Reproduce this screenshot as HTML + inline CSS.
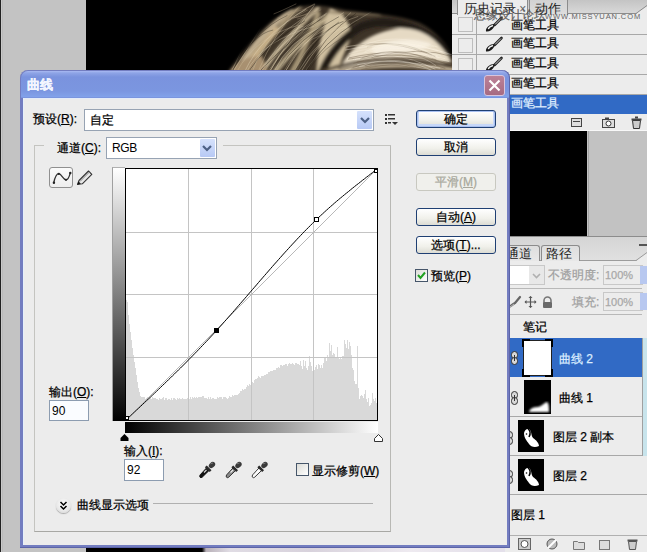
<!DOCTYPE html>
<html><head><meta charset="utf-8">
<style>
*{margin:0;padding:0;box-sizing:border-box}
html,body{width:647px;height:552px;overflow:hidden;background:#c3c3c3;font-family:"Liberation Sans",sans-serif;font-size:12px;color:#000}
.a{position:absolute}
.t{position:absolute;white-space:nowrap;line-height:12px;font-size:12px;-webkit-text-stroke:0.25px currentColor}
.u{text-decoration:underline}
.btn{position:absolute;left:416px;width:80px;border:1px solid #1f3f73;border-radius:3px;background:linear-gradient(#ffffff,#f0f0ea 60%,#dcdcd4);text-align:center;line-height:16px;font-size:12px;-webkit-text-stroke:0.25px currentColor}
.sel{position:absolute;border:1px solid #97a3b3;background:#fff}
.arr{position:absolute;top:1px;right:1px;width:15px;bottom:1px;background:linear-gradient(#d6e2fc,#b7c9f5);border-radius:1px}
.hrow{position:absolute;left:452px;width:195px;height:20px;background:#ececec;border-bottom:1px solid #a8a8a8}
.lrow{position:absolute;left:505px;width:137px;background:#ececec;border-bottom:1px solid #a8a8a8}
</style></head><body>
<!-- left dark edge -->
<div class="a" style="left:0;top:0;width:1px;height:552px;background:#222"></div>
<div class="a" style="left:1px;top:0;width:1px;height:552px;background:#cacaca"></div>
<div class="a" style="left:2px;top:0;width:1px;height:552px;background:#bababa"></div>
<!-- canvas black -->
<div class="a" style="left:86px;top:0;width:501px;height:552px;background:#000"></div>
<!-- bottom face strip -->
<div class="a" style="left:190px;top:546px;width:320px;height:6px;background:linear-gradient(90deg,#000 0px,#000 12px,#b8b0b8 16px,#e0dce4 40px,#d8d2dc 120px,#eeeaf0 220px,#e4e0ea 300px)"></div>
<!-- hair -->
<svg class="a" style="left:205px;top:0" width="251" height="72" viewBox="205 0 251 72">
<defs><filter id="bl" x="-10%" y="-30%" width="120%" height="160%"><feGaussianBlur stdDeviation="1.8"/></filter><filter id="mb"><feGaussianBlur stdDeviation="1.5"/></filter><mask id="hc" maskUnits="userSpaceOnUse" x="200" y="-10" width="260" height="90"><path d="M226,74 C236,60 248,46 260,32 C272,20 284,11 298,7 C314,4 330,6 345,10 C370,13 400,15 420,23 C436,31 448,45 454,60 L457,74 Z" fill="#fff" filter="url(#mb)"/></mask></defs>
<g mask="url(#hc)">
<rect x="205" y="0" width="251" height="72" fill="#3e3428"/>
<g filter="url(#bl)" fill="none" stroke-linecap="round">
<path d="M236,72 Q255,40 290,10" stroke="#c0ae90" stroke-width="6"/>
<path d="M248,72 Q265,40 300,6" stroke="#a89676" stroke-width="4"/>
<path d="M262,72 Q280,45 318,8" stroke="#c4b494" stroke-width="4"/>
<path d="M275,72 Q292,50 330,14" stroke="#b8a888" stroke-width="5"/>
<path d="M240,72 Q258,52 276,30" stroke="#c8b088" stroke-width="6"/>
<path d="M292,72 Q306,48 318,14" stroke="#a89878" stroke-width="5"/>
<path d="M228,72 C236,62 246,56 262,56 L268,72 Z" fill="#a89070"/>
<path d="M316,72 C318,50 322,28 330,8 C345,12 352,25 350,40 C345,52 340,62 338,72 Z" fill="#d0c0a0"/>
<path d="M322,72 Q335,42 362,26 Q405,12 450,52" stroke="#241c14" stroke-width="8"/>
<path d="M340,68 C350,46 372,32 400,28 C425,28 440,42 452,62 C440,64 400,58 365,64 Z" fill="#e6dac4"/>
<path d="M370,50 C385,40 410,36 432,44 C425,52 400,50 380,56 Z" fill="#f6eee0"/>
<path d="M322,71 Q380,52 442,64" stroke="#4a3c2e" stroke-width="3"/>
<path d="M335,72 Q390,60 456,70" stroke="#c0b096" stroke-width="4"/>
<path d="M330,12 Q350,14 380,14" stroke="#8a7a60" stroke-width="2"/>
</g>
<path d="M294.0,72.0 Q311.9,30.8 358.2,16.4" stroke="#d8c8a8" stroke-width="0.8" fill="none" opacity="0.42"/>
<path d="M231.7,72.0 Q253.2,33.5 273.2,30.0" stroke="#1e1810" stroke-width="0.8" fill="none" opacity="0.43"/>
<path d="M307.9,72.0 Q326.8,37.4 374.8,25.6" stroke="#1e1810" stroke-width="0.8" fill="none" opacity="0.32"/>
<path d="M273.6,72.0 Q289.2,40.2 321.7,26.6" stroke="#e0d4b8" stroke-width="0.8" fill="none" opacity="0.56"/>
<path d="M246.6,72.0 Q261.8,40.6 313.5,26.4" stroke="#e0d4b8" stroke-width="0.8" fill="none" opacity="0.45"/>
<path d="M263.8,72.0 Q286.9,34.7 309.9,11.1" stroke="#d8c8a8" stroke-width="0.8" fill="none" opacity="0.34"/>
<path d="M285.3,72.0 Q302.6,34.8 338.7,24.4" stroke="#d8c8a8" stroke-width="0.8" fill="none" opacity="0.45"/>
<path d="M269.5,72.0 Q293.9,31.3 316.6,2.4" stroke="#e0d4b8" stroke-width="0.8" fill="none" opacity="0.55"/>
<path d="M258.2,72.0 Q282.5,38.3 326.7,13.2" stroke="#e0d4b8" stroke-width="0.8" fill="none" opacity="0.52"/>
<path d="M283.3,72.0 Q300.5,39.6 343.8,15.0" stroke="#d8c8a8" stroke-width="0.8" fill="none" opacity="0.33"/>
<path d="M284.8,72.0 Q307.7,32.9 343.8,12.5" stroke="#d8c8a8" stroke-width="0.8" fill="none" opacity="0.54"/>
<path d="M259.2,72.0 Q283.6,44.9 320.6,19.2" stroke="#1e1810" stroke-width="0.8" fill="none" opacity="0.52"/>
<path d="M294.3,72.0 Q317.8,36.0 338.9,22.0" stroke="#1e1810" stroke-width="0.8" fill="none" opacity="0.44"/>
<path d="M306.6,72.0 Q321.6,36.3 356.1,13.3" stroke="#1e1810" stroke-width="0.8" fill="none" opacity="0.49"/>
<path d="M304.7,72.0 Q329.6,32.8 372.4,11.2" stroke="#e0d4b8" stroke-width="0.8" fill="none" opacity="0.35"/>
<path d="M261.2,72.0 Q284.5,32.1 303.4,26.0" stroke="#e0d4b8" stroke-width="0.8" fill="none" opacity="0.46"/>
<path d="M249.2,72.0 Q265.2,43.0 303.9,17.5" stroke="#e0d4b8" stroke-width="0.8" fill="none" opacity="0.43"/>
<path d="M232.7,72.0 Q251.1,43.9 272.8,7.5" stroke="#d8c8a8" stroke-width="0.8" fill="none" opacity="0.57"/>
<path d="M267.4,72.0 Q291.0,35.1 321.0,20.7" stroke="#d8c8a8" stroke-width="0.8" fill="none" opacity="0.42"/>
<path d="M276.7,72.0 Q298.6,40.5 338.8,16.0" stroke="#e0d4b8" stroke-width="0.8" fill="none" opacity="0.30"/>
<path d="M231.2,72.0 Q248.2,30.7 275.7,8.0" stroke="#e0d4b8" stroke-width="0.8" fill="none" opacity="0.48"/>
<path d="M300.7,72.0 Q319.8,40.2 351.1,12.3" stroke="#d8c8a8" stroke-width="0.8" fill="none" opacity="0.54"/>
<path d="M305.2,72.0 Q323.6,42.4 356.4,21.8" stroke="#1e1810" stroke-width="0.8" fill="none" opacity="0.56"/>
<path d="M269.4,72.0 Q287.6,37.4 331.2,17.0" stroke="#d8c8a8" stroke-width="0.8" fill="none" opacity="0.32"/>
<path d="M231.5,72.0 Q254.9,30.3 287.4,15.4" stroke="#1e1810" stroke-width="0.8" fill="none" opacity="0.45"/>
<path d="M277.0,72.0 Q297.7,37.4 338.9,16.7" stroke="#1e1810" stroke-width="0.8" fill="none" opacity="0.48"/>
<path d="M248.3,72.0 Q265.3,44.9 304.9,20.8" stroke="#1e1810" stroke-width="0.8" fill="none" opacity="0.59"/>
<path d="M252.1,72.0 Q267.6,30.3 305.4,9.3" stroke="#e0d4b8" stroke-width="0.8" fill="none" opacity="0.37"/>
<path d="M298.6,72.0 Q316.1,31.0 343.5,21.3" stroke="#1e1810" stroke-width="0.8" fill="none" opacity="0.50"/>
<path d="M269.1,72.0 Q286.9,37.3 325.6,14.7" stroke="#d8c8a8" stroke-width="0.8" fill="none" opacity="0.58"/>
<path d="M244.5,72.0 Q261.5,34.9 306.5,9.0" stroke="#e0d4b8" stroke-width="0.8" fill="none" opacity="0.58"/>
<path d="M257.9,72.0 Q273.5,33.2 303.2,2.0" stroke="#d8c8a8" stroke-width="0.8" fill="none" opacity="0.43"/>
<path d="M277.3,72.0 Q294.8,39.2 346.8,26.9" stroke="#e0d4b8" stroke-width="0.8" fill="none" opacity="0.33"/>
<path d="M298.0,72.0 Q316.3,39.4 349.9,23.9" stroke="#e0d4b8" stroke-width="0.8" fill="none" opacity="0.45"/>
<path d="M236.6,72.0 Q256.4,35.8 299.4,25.0" stroke="#d8c8a8" stroke-width="0.8" fill="none" opacity="0.41"/>
<path d="M371.4,55.5 Q396.7,45.2 439.7,57.8" stroke="#fff8ea" stroke-width="0.8" fill="none" opacity="0.37"/>
<path d="M346.9,58.5 Q387.3,41.5 441.5,56.8" stroke="#f6eedc" stroke-width="0.8" fill="none" opacity="0.41"/>
<path d="M373.5,47.8 Q397.5,39.3 440.7,55.4" stroke="#f6eedc" stroke-width="0.8" fill="none" opacity="0.58"/>
<path d="M365.5,51.5 Q411.9,35.9 442.5,52.5" stroke="#f6eedc" stroke-width="0.8" fill="none" opacity="0.46"/>
<path d="M350.5,55.1 Q393.7,44.5 449.3,61.7" stroke="#f6eedc" stroke-width="0.8" fill="none" opacity="0.43"/>
<path d="M356.6,62.1 Q402.4,53.5 450.5,64.1" stroke="#6a5a46" stroke-width="0.8" fill="none" opacity="0.58"/>
<path d="M360.1,58.9 Q409.0,48.9 445.8,63.7" stroke="#6a5a46" stroke-width="0.8" fill="none" opacity="0.39"/>
<path d="M371.6,57.5 Q418.9,45.4 455.0,57.2" stroke="#6a5a46" stroke-width="0.8" fill="none" opacity="0.56"/>
<path d="M348.9,57.9 Q399.1,46.7 436.5,60.0" stroke="#6a5a46" stroke-width="0.8" fill="none" opacity="0.54"/>
<path d="M345.4,70.0 Q394.1,56.7 454.8,76.1" stroke="#fff8ea" stroke-width="0.8" fill="none" opacity="0.41"/>
<path d="M346.0,46.8 Q396.8,36.8 434.1,46.9" stroke="#f6eedc" stroke-width="0.8" fill="none" opacity="0.55"/>
<path d="M345.2,46.4 Q394.7,38.3 431.6,55.6" stroke="#6a5a46" stroke-width="0.8" fill="none" opacity="0.37"/>
<path d="M352.9,59.6 Q391.5,47.0 435.3,69.3" stroke="#fff8ea" stroke-width="0.8" fill="none" opacity="0.47"/>
<path d="M353.4,63.4 Q396.3,48.9 455.8,68.5" stroke="#6a5a46" stroke-width="0.8" fill="none" opacity="0.45"/>
<path d="M364.6,51.5 Q392.6,38.8 437.9,55.7" stroke="#fff8ea" stroke-width="0.8" fill="none" opacity="0.35"/>
<path d="M352.6,67.5 Q402.9,51.5 445.3,68.4" stroke="#6a5a46" stroke-width="0.8" fill="none" opacity="0.54"/>
<path d="M355.0,59.6 Q403.9,46.5 445.2,58.6" stroke="#fff8ea" stroke-width="0.8" fill="none" opacity="0.46"/>
<path d="M367.1,46.9 Q397.3,36.9 435.5,56.8" stroke="#6a5a46" stroke-width="0.8" fill="none" opacity="0.39"/>
<path d="M361.8,46.0 Q392.7,31.6 437.5,47.1" stroke="#f6eedc" stroke-width="0.8" fill="none" opacity="0.59"/>
<path d="M372.5,56.0 Q402.6,45.0 431.7,58.2" stroke="#f6eedc" stroke-width="0.8" fill="none" opacity="0.52"/>
<path d="M371.9,56.7 Q411.7,47.7 436.2,65.7" stroke="#fff8ea" stroke-width="0.8" fill="none" opacity="0.36"/>
<path d="M364.8,65.5 Q403.7,52.4 455.0,63.8" stroke="#6a5a46" stroke-width="0.8" fill="none" opacity="0.53"/>
<path d="M361.7,58.0 Q400.6,42.4 436.2,63.8" stroke="#6a5a46" stroke-width="0.8" fill="none" opacity="0.36"/>
<path d="M348.7,53.8 Q387.0,40.2 438.5,57.3" stroke="#fff8ea" stroke-width="0.8" fill="none" opacity="0.30"/>
<path d="M372.3,47.3 Q403.6,37.5 438.0,51.1" stroke="#fff8ea" stroke-width="0.8" fill="none" opacity="0.52"/>
<path d="M370.2,50.7 Q395.2,35.2 434.3,54.9" stroke="#f6eedc" stroke-width="0.8" fill="none" opacity="0.55"/>
<path d="M357.3,64.7 Q390.9,56.4 440.2,68.2" stroke="#fff8ea" stroke-width="0.8" fill="none" opacity="0.50"/>
<path d="M350.8,68.9 Q405.6,58.5 444.7,73.8" stroke="#6a5a46" stroke-width="0.8" fill="none" opacity="0.37"/>
<path d="M358.7,48.8 Q395.6,38.1 437.3,55.6" stroke="#f6eedc" stroke-width="0.8" fill="none" opacity="0.37"/>
<path d="M360.9,69.9 Q403.2,57.1 434.4,78.0" stroke="#6a5a46" stroke-width="0.8" fill="none" opacity="0.46"/>
<path d="M348.1,59.2 Q401.2,47.7 455.7,66.0" stroke="#6a5a46" stroke-width="0.8" fill="none" opacity="0.56"/>
<path d="M345.2,50.0 Q406.6,37.7 454.9,55.8" stroke="#fff8ea" stroke-width="0.8" fill="none" opacity="0.46"/>
<path d="M363.9,47.2 Q394.4,38.8 442.5,56.5" stroke="#f6eedc" stroke-width="0.8" fill="none" opacity="0.33"/>
<path d="M365.5,67.3 Q394.2,55.0 434.1,75.5" stroke="#6a5a46" stroke-width="0.8" fill="none" opacity="0.34"/>
<path d="M359.3,66.7 Q398.4,51.1 439.2,74.2" stroke="#fff8ea" stroke-width="0.8" fill="none" opacity="0.42"/>
</g>
<path d="M293.3,11.5 Q299.3,12.3 315.0,4.3" stroke="#9a8a70" stroke-width="0.7" fill="none" opacity="0.60"/>
<path d="M277.3,18.1 Q283.3,16.8 297.2,8.8" stroke="#9a8a70" stroke-width="0.7" fill="none" opacity="0.60"/>
<path d="M287.9,21.6 Q293.9,17.9 307.8,9.9" stroke="#9a8a70" stroke-width="0.7" fill="none" opacity="0.60"/>
<path d="M288.9,18.4 Q294.9,19.1 313.1,11.1" stroke="#9a8a70" stroke-width="0.7" fill="none" opacity="0.60"/>
<path d="M293.7,17.1 Q299.7,11.7 314.6,3.7" stroke="#9a8a70" stroke-width="0.7" fill="none" opacity="0.60"/>
<path d="M273.6,14.0 Q279.6,11.8 296.3,3.8" stroke="#9a8a70" stroke-width="0.7" fill="none" opacity="0.60"/>
<path d="M285.3,18.0 Q291.3,19.8 314.0,11.8" stroke="#9a8a70" stroke-width="0.7" fill="none" opacity="0.60"/>
<path d="M297.2,19.2 Q303.2,17.7 321.2,9.7" stroke="#9a8a70" stroke-width="0.7" fill="none" opacity="0.60"/>
</svg>


<!-- gray block right of canvas under history -->
<div class="a" style="left:588px;top:130px;width:59px;height:106px;background:#c2c2c2;border-left:1px solid #a4a4a4"></div>

<!-- M126,420 L126,300 L127,300 L127,302 L128,302 L128,315 L129,315 L129,324 L130,324 L130,332 L131,332 L131,340 L132,340 L132,348 L133,348 L133,355 L134,355 L134,362 L135,362 L135,368 L136,368 L136,375 L137,375 L137,382 L138,382 L138,388 L139,388 L139,392 L140,392 L140,396 L141,396 L141,397 L142,397 L142,397 L143,397 L143,397 L144,397 L144,397 L145,397 L145,399 L146,399 L146,398 L147,398 L147,397 L148,397 L148,398 L149,398 L149,398 L150,398 L150,397 L151,397 L151,399 L152,399 L152,397 L153,397 L153,398 L154,398 L154,398 L155,398 L155,398 L156,398 L156,399 L157,399 L157,399 L158,399 L158,400 L159,400 L159,398 L160,398 L160,399 L161,399 L161,399 L162,399 L162,398 L163,398 L163,397 L164,397 L164,400 L165,400 L165,398 L166,398 L166,398 L167,398 L167,400 L168,400 L168,399 L169,399 L169,399 L170,399 L170,400 L171,400 L171,398 L172,398 L172,400 L173,400 L173,398 L174,398 L174,398 L175,398 L175,399 L176,399 L176,400 L177,400 L177,398 L178,398 L178,399 L179,399 L179,398 L180,398 L180,399 L181,399 L181,399 L182,399 L182,398 L183,398 L183,399 L184,399 L184,399 L185,399 L185,399 L186,399 L186,399 L187,399 L187,398 L188,398 L188,399 L189,399 L189,399 L190,399 L190,397 L191,397 L191,399 L192,399 L192,397 L193,397 L193,398 L194,398 L194,397 L195,397 L195,398 L196,398 L196,397 L197,397 L197,398 L198,398 L198,397 L199,397 L199,397 L200,397 L200,397 L201,397 L201,397 L202,397 L202,396 L203,396 L203,396 L204,396 L204,398 L205,398 L205,398 L206,398 L206,398 L207,398 L207,399 L208,399 L208,397 L209,397 L209,399 L210,399 L210,397 L211,397 L211,399 L212,399 L212,398 L213,398 L213,398 L214,398 L214,399 L215,399 L215,399 L216,399 L216,399 L217,399 L217,397 L218,397 L218,398 L219,398 L219,397 L220,397 L220,397 L221,397 L221,397 L222,397 L222,399 L223,399 L223,397 L224,397 L224,397 L225,397 L225,397 L226,397 L226,398 L227,398 L227,399 L228,399 L228,398 L229,398 L229,396 L230,396 L230,397 L231,397 L231,397 L232,397 L232,395 L233,395 L233,396 L234,396 L234,395 L235,395 L235,395 L236,395 L236,395 L237,395 L237,395 L238,395 L238,394 L239,394 L239,393 L240,393 L240,391 L241,391 L241,391 L242,391 L242,389 L243,389 L243,390 L244,390 L244,389 L245,389 L245,389 L246,389 L246,387 L247,387 L247,385 L248,385 L248,386 L249,386 L249,384 L250,384 L250,385 L251,385 L251,383 L252,383 L252,382 L253,382 L253,383 L254,383 L254,380 L255,380 L255,379 L256,379 L256,379 L257,379 L257,378 L258,378 L258,376 L259,376 L259,377 L260,377 L260,378 L261,378 L261,376 L262,376 L262,376 L263,376 L263,376 L264,376 L264,375 L265,375 L265,375 L266,375 L266,374 L267,374 L267,374 L268,374 L268,372 L269,372 L269,372 L270,372 L270,371 L271,371 L271,371 L272,371 L272,371 L273,371 L273,370 L274,370 L274,370 L275,370 L275,370 L276,370 L276,368 L277,368 L277,368 L278,368 L278,367 L279,367 L279,368 L280,368 L280,365 L281,365 L281,365 L282,365 L282,366 L283,366 L283,365 L284,365 L284,365 L285,365 L285,364 L286,364 L286,364 L287,364 L287,366 L288,366 L288,364 L289,364 L289,363 L290,363 L290,364 L291,364 L291,364 L292,364 L292,363 L293,363 L293,364 L294,364 L294,365 L295,365 L295,363 L296,363 L296,363 L297,363 L297,364 L298,364 L298,364 L299,364 L299,365 L300,365 L300,361 L301,361 L301,366 L302,366 L302,369 L303,369 L303,360 L304,360 L304,366 L305,366 L305,361 L306,361 L306,368 L307,368 L307,370 L308,370 L308,366 L309,366 L309,356 L310,356 L310,362 L311,362 L311,366 L312,366 L312,371 L313,371 L313,365 L314,365 L314,370 L315,370 L315,367 L316,367 L316,365 L317,365 L317,369 L318,369 L318,364 L319,364 L319,365 L320,365 L320,368 L321,368 L321,365 L322,365 L322,368 L323,368 L323,363 L324,363 L324,357 L325,357 L325,358 L326,358 L326,361 L327,361 L327,355 L328,355 L328,358 L329,358 L329,343 L330,343 L330,351 L331,351 L331,345 L332,345 L332,355 L333,355 L333,353 L334,353 L334,354 L335,354 L335,358 L336,358 L336,357 L337,357 L337,347 L338,347 L338,357 L339,357 L339,359 L340,359 L340,357 L341,357 L341,359 L342,359 L342,356 L343,356 L343,356 L344,356 L344,340 L345,340 L345,344 L346,344 L346,348 L347,348 L347,340 L348,340 L348,349 L349,349 L349,342 L350,342 L350,346 L351,346 L351,355 L352,355 L352,368 L353,368 L353,370 L354,370 L354,381 L355,381 L355,384 L356,384 L356,384 L357,384 L357,346 L358,346 L358,388 L359,388 L359,399 L360,399 L360,396 L361,396 L361,395 L362,395 L362,396 L363,396 L363,398 L364,398 L364,394 L365,394 L365,390 L366,390 L366,399 L367,399 L367,402 L368,402 L368,398 L369,398 L369,406 L370,406 L370,405 L371,405 L371,403 L372,403 L372,393 L373,393 L373,399 L374,399 L374,401 L375,401 L375,398 L376,398 L376,403 L377,403 L377,420 ZORY PANEL -->
<div class="a" style="left:452px;top:0;width:195px;height:131px;background:#ececec"></div>
<div class="a" style="left:452px;top:0;width:195px;height:14px;background:linear-gradient(#c4c4c4,#d8d8d8);border-bottom:1px solid #8c8c8c"></div><svg class="a" style="left:636px;top:0" width="11" height="15"><path d="M0,14 L11,6 L11,15 L0,15 Z" fill="#ececec"/><path d="M0,13.5 L11,5.5" stroke="#8c8c8c"/></svg>
<div class="a" style="left:457px;top:-4px;width:71px;height:20px;background:#ececec;border:1px solid #8c8c8c;border-bottom:none;border-radius:4px 4px 0 0"></div>
<div class="t" style="left:464px;top:2px;color:#222;font-size:13px;line-height:13px;-webkit-text-stroke:0">历史记录<span style="color:#666;font-size:12px"> ×</span></div>
<div class="a" style="left:529px;top:-4px;width:39px;height:19px;background:linear-gradient(#d0d0d0,#dedede);border:1px solid #8c8c8c;border-bottom:none;border-radius:4px 4px 0 0"></div>
<div class="t" style="left:535px;top:2px;color:#222;font-size:13px;line-height:13px;-webkit-text-stroke:0">动作</div>
<!-- rows -->
<div class="hrow" style="top:15px"></div>
<div class="hrow" style="top:35px"></div>
<div class="hrow" style="top:55px"></div>
<div class="hrow" style="top:75px"></div>
<div class="a" style="left:452px;top:95px;width:195px;height:19px;background:#316ac5"></div>
<div class="a" style="left:476px;top:14px;width:1px;height:81px;background:#a8a8a8"></div>
<div class="a" style="left:458px;top:17px;width:15px;height:15px;border:1px solid #bdbdbd"></div>
<div class="a" style="left:458px;top:38px;width:15px;height:15px;border:1px solid #bdbdbd"></div>
<div class="a" style="left:458px;top:58px;width:15px;height:15px;border:1px solid #bdbdbd"></div>
<div class="a" style="left:458px;top:78px;width:15px;height:15px;border:1px solid #bdbdbd"></div>
<svg class="a" style="left:484px;top:16px" width="20" height="18"><path d="M17.5,2 L10.5,9" stroke="#222" stroke-width="2.6" stroke-linecap="round"/><path d="M17,2.5 L11,8.5" stroke="#ddd" stroke-width="0.9"/><path d="M2,15.5 C1.5,13 3.5,10 7,8.5 L10.5,8 L10,11 C8.5,14 5,16 2,15.5 Z" fill="#1a1a1a"/><path d="M4.5,12.5 C5.5,11 7,10 8.5,9.8" stroke="#f0f0f0" stroke-width="1.4" stroke-linecap="round"/></svg>
<svg class="a" style="left:484px;top:36px" width="20" height="18"><path d="M17.5,2 L10.5,9" stroke="#222" stroke-width="2.6" stroke-linecap="round"/><path d="M17,2.5 L11,8.5" stroke="#ddd" stroke-width="0.9"/><path d="M2,15.5 C1.5,13 3.5,10 7,8.5 L10.5,8 L10,11 C8.5,14 5,16 2,15.5 Z" fill="#1a1a1a"/><path d="M4.5,12.5 C5.5,11 7,10 8.5,9.8" stroke="#f0f0f0" stroke-width="1.4" stroke-linecap="round"/></svg>
<svg class="a" style="left:484px;top:56px" width="20" height="18"><path d="M17.5,2 L10.5,9" stroke="#222" stroke-width="2.6" stroke-linecap="round"/><path d="M17,2.5 L11,8.5" stroke="#ddd" stroke-width="0.9"/><path d="M2,15.5 C1.5,13 3.5,10 7,8.5 L10.5,8 L10,11 C8.5,14 5,16 2,15.5 Z" fill="#1a1a1a"/><path d="M4.5,12.5 C5.5,11 7,10 8.5,9.8" stroke="#f0f0f0" stroke-width="1.4" stroke-linecap="round"/></svg>
<svg class="a" style="left:484px;top:76px" width="20" height="18"><path d="M17.5,2 L10.5,9" stroke="#222" stroke-width="2.6" stroke-linecap="round"/><path d="M17,2.5 L11,8.5" stroke="#ddd" stroke-width="0.9"/><path d="M2,15.5 C1.5,13 3.5,10 7,8.5 L10.5,8 L10,11 C8.5,14 5,16 2,15.5 Z" fill="#1a1a1a"/><path d="M4.5,12.5 C5.5,11 7,10 8.5,9.8" stroke="#f0f0f0" stroke-width="1.4" stroke-linecap="round"/></svg>
<svg class="a" style="left:484px;top:96px" width="20" height="18"><path d="M17.5,2 L10.5,9" stroke="#222" stroke-width="2.6" stroke-linecap="round"/><path d="M17,2.5 L11,8.5" stroke="#ddd" stroke-width="0.9"/><path d="M2,15.5 C1.5,13 3.5,10 7,8.5 L10.5,8 L10,11 C8.5,14 5,16 2,15.5 Z" fill="#1a1a1a"/><path d="M4.5,12.5 C5.5,11 7,10 8.5,9.8" stroke="#f0f0f0" stroke-width="1.4" stroke-linecap="round"/></svg>

<div class="t" style="left:511px;top:37px;">画笔工具</div>
<div class="t" style="left:511px;top:57px;">画笔工具</div>
<div class="t" style="left:511px;top:77px;">画笔工具</div>
<div class="t" style="left:511px;top:97px;color:#e0f0ff">画笔工具</div>
<div class="t" style="left:511px;top:19px;">画笔工具</div>
<!-- watermark -->
<div class="t" style="left:474px;top:9px;font-size:11.5px;color:rgba(70,70,70,0.8)">思缘设计论坛</div>
<div class="t" style="left:545px;top:13px;font-size:7.5px;line-height:7px;color:#666;letter-spacing:0.9px;-webkit-text-stroke:0">WWW.MISSYUAN.COM</div>
<!-- bottom toolbar -->
<div class="a" style="left:452px;top:114px;width:195px;height:17px;background:#ececec;border-bottom:1px solid #f8f8f8"></div>
<svg class="a" style="left:570px;top:115px" width="77" height="14">
<rect x="1.5" y="3.5" width="10" height="8" fill="#ddd" stroke="#444"/><line x1="3" y1="6.5" x2="10" y2="6.5" stroke="#444"/>
<rect x="32.5" y="4.5" width="12" height="8" fill="#ddd" stroke="#444"/><circle cx="38.5" cy="8.5" r="2.5" fill="#fff" stroke="#333"/><rect x="35" y="2.5" width="4" height="2" fill="#444"/>
<path d="M62.5,5.5 h8 l-1,8 h-6 z" fill="#ccc" stroke="#333"/><rect x="61.5" y="3.5" width="10" height="2" fill="#444"/><rect x="65" y="1.5" width="3" height="2" fill="#444"/>
</svg>

<!-- LAYERS PANEL -->
<div class="a" style="left:505px;top:236px;width:142px;height:316px;background:#ececec"></div>
<div class="a" style="left:505px;top:236px;width:142px;height:25px;background:linear-gradient(#d4d4d4,#e0e0e0);border-bottom:1px solid #9c9c9c"></div>
<div class="a" style="left:500px;top:245px;width:40px;height:16px;background:linear-gradient(#dedede,#e8e8e8);border:1px solid #8c8c8c;border-bottom:none;border-radius:3px 3px 0 0"></div>
<div class="t" style="left:506px;top:247px;color:#222;font-size:13px;line-height:13px;-webkit-text-stroke:0">通道</div>
<div class="a" style="left:541px;top:245px;width:39px;height:16px;background:linear-gradient(#dedede,#e8e8e8);border:1px solid #8c8c8c;border-bottom:none;border-radius:3px 3px 0 0"></div>
<div class="t" style="left:546px;top:247px;color:#222;font-size:13px;line-height:13px;-webkit-text-stroke:0">路径</div>
<div class="a" style="left:505px;top:236px;width:142px;height:1px;background:#8c8c8c"></div><div class="a" style="left:639px;top:244px;width:8px;height:2px;background:#555"></div><svg class="a" style="left:636px;top:250px" width="11" height="12"><path d="M0,11 L11,3 L11,12 L0,12 Z" fill="#ececec"/><path d="M0,10.5 L11,2.5" stroke="#9c9c9c"/></svg>
<!-- opacity row -->
<div class="a" style="left:505px;top:265px;width:40px;height:20px;background:#fff;border:1px solid #c8c8c8"></div>
<div class="a" style="left:529px;top:266px;width:15px;height:18px;background:#e8e8e8"></div><svg class="a" style="left:529px;top:266px" width="15" height="18"><path d="M4,8 L7.5,11.5 L11,8" stroke="#b0b0b0" stroke-width="1.6" fill="none"/></svg>
<div class="t" style="left:548px;top:269px;color:#a0a0a0">不透明度:</div>
<div class="a" style="left:603px;top:265px;width:40px;height:20px;border:1px solid #c8c8c8;background:#ececec"></div>
<div class="t" style="left:605px;top:269px;color:#a8a8a8;font-size:11px">100%</div>
<div class="a" style="left:640px;top:266px;width:7px;height:18px;background:#b8c8f0"></div>
<div class="a" style="left:505px;top:288px;width:137px;height:1px;background:#b8b8b8"></div>
<!-- fill row -->
<div class="t" style="left:572px;top:296px;color:#a0a0a0">填充:</div>
<div class="a" style="left:603px;top:292px;width:40px;height:19px;border:1px solid #c8c8c8;background:#ececec"></div>
<div class="t" style="left:605px;top:296px;color:#a8a8a8;font-size:11px">100%</div>
<div class="a" style="left:640px;top:293px;width:7px;height:17px;background:#b8c8f0"></div>
<svg class="a" style="left:508px;top:293px" width="45" height="18">
<path d="M1,14 C3,13 5,11 7,10 L12,4" stroke="#666" stroke-width="2.2" stroke-linecap="round" fill="none"/><path d="M2,14 L6,11" stroke="#ccc" stroke-width="0.8"/>
<path d="M22.5,3.5 v11 M17,9 h11" stroke="#555" stroke-width="1.2" fill="none"/><path d="M22.5,3 l-2,2 h4 z M22.5,15 l-2,-2 h4 z M16.5,9 l2,-2 v4 z M28.5,9 l-2,-2 v4 z" fill="#555"/>
<path d="M36,9.5 v-2 a3.5,3.5 0 0 1 7,0 v2" stroke="#777" stroke-width="1.6" fill="none"/><rect x="35" y="9" width="9" height="6" rx="1" fill="#6a6a6a"/>
</svg>
<div class="a" style="left:505px;top:314px;width:137px;height:1px;background:#b8b8b8"></div>
<div class="t" style="left:523px;top:321px">笔记</div>
<!-- layer rows -->
<div class="a" style="left:642px;top:338px;width:5px;height:125px;background:#c8e4ec;border-left:1px solid #a0a0a0;border-bottom:1px solid #a0a0a0"></div>
<div class="a" style="left:505px;top:338px;width:137px;height:39px;background:#316ac5"></div>
<svg class="a" style="left:522px;top:339px" width="31" height="38"><rect x="1.5" y="1.5" width="28" height="35" fill="#fff" stroke="#222" stroke-width="1"/><path d="M1,8 V1 H8 M23,1 H30 V8 M30,30 V37 H23 M8,37 H1 V30" stroke="#000" stroke-width="2" fill="none"/></svg>
<div class="t" style="left:559px;top:353px;color:#dceeff">曲线 2</div>
<div class="lrow" style="top:377px;height:40px"></div>
<div class="a" style="left:524px;top:380px;width:27px;height:34px;background:#000"></div>
<svg class="a" style="left:524px;top:380px" width="27" height="34"><defs><filter id="tb"><feGaussianBlur stdDeviation="0.8"/></filter></defs><path d="M5,32 C6,28 10,27 14,27 C18,26 20,23 23,22 C25,23 25,28 25,32 Z" fill="#fff" filter="url(#tb)"/></svg>
<div class="t" style="left:559px;top:392px">曲线 1</div>
<div class="lrow" style="top:417px;height:39px"></div>
<div class="a" style="left:518px;top:420px;width:26px;height:32px;background:#000"></div>
<svg class="a" style="left:518px;top:420px" width="26" height="32"><path d="M6,13 C7,9 10,8 12,10 C14,13 13,16 15,18 C18,20 21,23 21,26 C17,28 13,27 11,24 C9,21 6,18 6,13 Z" fill="#fff"/><path d="M10,9 C13,11 12,15 11,17" stroke="#000" stroke-width="1.5" fill="none"/><circle cx="8.5" cy="14" r="0.8" fill="#000"/></svg>
<div class="t" style="left:553px;top:431px">图层 2 副本</div>
<div class="lrow" style="top:456px;height:39px;width:142px"></div>
<div class="a" style="left:518px;top:459px;width:26px;height:32px;background:#000"></div>
<svg class="a" style="left:518px;top:459px" width="26" height="32"><path d="M6,13 C7,9 10,8 12,10 C14,13 13,16 15,18 C18,20 21,23 21,26 C17,28 13,27 11,24 C9,21 6,18 6,13 Z" fill="#fff"/><path d="M10,9 C13,11 12,15 11,17" stroke="#000" stroke-width="1.5" fill="none"/><circle cx="8.5" cy="14" r="0.8" fill="#000"/></svg>
<div class="t" style="left:553px;top:470px">图层 2</div>
<div class="lrow" style="top:495px;height:40px;width:142px;border-bottom:none"></div>
<div class="t" style="left:511px;top:509px">图层 1</div>
<!-- links -->
<svg class="a" style="left:505px;top:340px" width="15" height="160"><rect x="6.5" y="11.5" width="6" height="7" rx="3" fill="#d8d8d8" stroke="#333"/><rect x="6.5" y="17.5" width="6" height="7" rx="3" fill="#d8d8d8" stroke="#333"/><line x1="9.5" y1="15" x2="9.5" y2="21" stroke="#333"/><rect x="6.5" y="51.5" width="6" height="7" rx="3" fill="#d8d8d8" stroke="#333"/><rect x="6.5" y="57.5" width="6" height="7" rx="3" fill="#d8d8d8" stroke="#333"/><line x1="9.5" y1="55" x2="9.5" y2="61" stroke="#333"/><rect x="1.5" y="91.5" width="6" height="7" rx="3" fill="#d8d8d8" stroke="#333"/><rect x="1.5" y="97.5" width="6" height="7" rx="3" fill="#d8d8d8" stroke="#333"/><line x1="4.5" y1="95" x2="4.5" y2="101" stroke="#333"/><rect x="1.5" y="130.5" width="6" height="7" rx="3" fill="#d8d8d8" stroke="#333"/><rect x="1.5" y="136.5" width="6" height="7" rx="3" fill="#d8d8d8" stroke="#333"/><line x1="4.5" y1="134" x2="4.5" y2="140" stroke="#333"/></svg>
<!-- bottom toolbar layers -->
<div class="a" style="left:505px;top:535px;width:142px;height:17px;background:#ececec;border-top:1px solid #b0b0b0"></div>
<svg class="a" style="left:515px;top:537px" width="132" height="15">
<rect x="3.5" y="1.5" width="12" height="11" fill="#ccc" stroke="#666"/><circle cx="9.5" cy="7" r="3.5" fill="#fff" stroke="#555"/>
<circle cx="37" cy="7" r="5" fill="#bbb" stroke="#555"/><path d="M33,11 L41,3" stroke="#fff" stroke-width="2"/>
<path d="M58.5,4.5 h4 l1,1 h6 v7 h-11 z" fill="#ddd" stroke="#777"/>
<rect x="84.5" y="3.5" width="10" height="9" fill="#ddd" stroke="#777"/>
<path d="M113.5,4.5 h8 l-1,8 h-6 z" fill="#ccc" stroke="#555"/><rect x="112.5" y="2.5" width="10" height="2" fill="#555"/>
</svg>

<!-- DIALOG -->
<div class="a" style="left:20px;top:70px;width:490px;height:478px;background:#737dc0;border-radius:8px 8px 0 0;box-shadow:inset 0 -1px 0 #5c64a8,inset -1px 0 0 #5c64a8"></div>
<div class="a" style="left:21px;top:71px;width:488px;height:27px;border-radius:7px 7px 0 0;background:linear-gradient(#a9b9f2 0px,#8ea4e6 2px,#7a93de 6px,#7b96e0 20px,#82a2ea 26px,#7288d4 27px)"></div>
<div class="t" style="left:27px;top:78px;font-size:13px;line-height:13px;font-weight:bold;color:#f4f6ff">曲线</div>
<!-- close btn -->
<div class="a" style="left:484px;top:75px;width:21px;height:21px;border-radius:3px;background:linear-gradient(#bc8298,#a66a82);border:1px solid #d8c4dc"></div>
<svg class="a" style="left:484px;top:75px" width="21" height="21"><path d="M5.5,5.5 L15.5,15.5 M15.5,5.5 L5.5,15.5" stroke="#fff" stroke-width="2.2"/></svg>
<!-- content -->
<div class="a" style="left:23px;top:98px;width:484px;height:447px;background:#ececec"></div>
<div class="a" style="left:23px;top:98px;width:484px;height:1px;background:#e4ecf8"></div><div class="a" style="left:23px;top:98px;width:1px;height:447px;background:#e6f0fa"></div>

<div class="t" style="left:33px;top:113px">预设(<span class="u">R</span>):</div>
<div class="sel" style="left:84px;top:109px;width:290px;height:22px"><div class="arr"></div></div>
<svg class="a" style="left:357px;top:111px" width="16" height="18"><path d="M4,7 L8,11 L12,7" stroke="#4d6185" stroke-width="2.2" fill="none"/></svg>
<div class="t" style="left:90px;top:114px">自定</div>
<svg class="a" style="left:384px;top:113px" width="16" height="12"><rect x="1" y="1" width="2" height="2" fill="#333"/><rect x="4" y="1" width="7" height="1.5" fill="#333"/><rect x="1" y="5" width="2" height="2" fill="#333"/><rect x="4" y="5" width="7" height="1.5" fill="#333"/><rect x="1" y="9" width="2" height="2" fill="#333"/><rect x="4" y="9" width="3" height="1.5" fill="#333"/><path d="M8,9 h6 l-3,3 z" fill="#333"/></svg>

<!-- group box -->
<div class="a" style="left:34px;top:145px;width:357px;height:387px;border:1px solid #c4c4c0;border-right-color:#b8b8b4;border-bottom-color:#a8a8a4"></div>
<div class="a" style="left:44px;top:140px;width:179px;height:10px;background:#ececec"></div>
<div class="t" style="left:57px;top:142px">通道(<span class="u">C</span>):</div>
<div class="sel" style="left:106px;top:137px;width:111px;height:22px"><div class="arr"></div></div>
<svg class="a" style="left:199px;top:139px" width="16" height="18"><path d="M4,7 L8,11 L12,7" stroke="#4d6185" stroke-width="2.2" fill="none"/></svg>
<div class="t" style="left:112px;top:142px;font-size:12px;line-height:13px;letter-spacing:-0.4px;-webkit-text-stroke:0">RGB</div>

<!-- tools -->
<div class="a" style="left:49px;top:167px;width:24px;height:21px;border:1px solid #909090;border-radius:3px;background:linear-gradient(#fbfbfb,#eeeeee)"></div>
<svg class="a" style="left:50px;top:167px" width="45" height="21">
<path d="M3.7,16 C5,10 6.5,6.7 8.8,6.7 C11.5,6.7 13,12.8 16,12.8 C18.5,12.8 19.5,9 20.3,5.9" stroke="#333" stroke-width="1.3" fill="none"/>
<circle cx="3.9" cy="15.8" r="1.2" fill="#222"/><circle cx="8.8" cy="6.9" r="1.1" fill="#222"/><circle cx="16" cy="12.8" r="1.1" fill="#222"/><circle cx="20.3" cy="6" r="1.2" fill="#222"/>
<path d="M27.5,17.5 L29,13.5 L38.5,4 L41.8,7.3 L32.3,16.8 Z" fill="#e8e8e8" stroke="#333" stroke-width="1.1" stroke-linejoin="round"/>
<path d="M30,14.5 L39.5,5" stroke="#888" stroke-width="1"/>
<path d="M27.3,17.7 L28.5,14.5 L30.8,16.5 Z" fill="#111"/>
</svg>
<!-- graph -->
<div class="a" style="left:112px;top:167px;width:13px;height:254px;border-left:1px solid #a0a0a0;border-top:1px solid #b0b0b0;background:linear-gradient(#ffffff,#000000)"></div>
<div class="a" style="left:125px;top:422px;width:253px;height:11px;background:linear-gradient(90deg,#000000,#ffffff)"></div>
<svg class="a" style="left:0;top:0" width="647" height="552" viewBox="0 0 647 552">
<rect x="125.5" y="168.5" width="252" height="252" fill="#fff" stroke="#000"/>
<path d="M126,420 L126,300 L127,300 L127,302 L128,302 L128,315 L129,315 L129,324 L130,324 L130,332 L131,332 L131,340 L132,340 L132,348 L133,348 L133,355 L134,355 L134,362 L135,362 L135,368 L136,368 L136,375 L137,375 L137,382 L138,382 L138,388 L139,388 L139,392 L140,392 L140,396 L141,396 L141,397 L142,397 L142,397 L143,397 L143,397 L144,397 L144,397 L145,397 L145,399 L146,399 L146,398 L147,398 L147,397 L148,397 L148,398 L149,398 L149,398 L150,398 L150,397 L151,397 L151,399 L152,399 L152,397 L153,397 L153,398 L154,398 L154,398 L155,398 L155,398 L156,398 L156,399 L157,399 L157,399 L158,399 L158,400 L159,400 L159,398 L160,398 L160,399 L161,399 L161,399 L162,399 L162,398 L163,398 L163,397 L164,397 L164,400 L165,400 L165,398 L166,398 L166,398 L167,398 L167,400 L168,400 L168,399 L169,399 L169,399 L170,399 L170,400 L171,400 L171,398 L172,398 L172,400 L173,400 L173,398 L174,398 L174,398 L175,398 L175,399 L176,399 L176,400 L177,400 L177,398 L178,398 L178,399 L179,399 L179,398 L180,398 L180,399 L181,399 L181,399 L182,399 L182,398 L183,398 L183,399 L184,399 L184,399 L185,399 L185,399 L186,399 L186,399 L187,399 L187,398 L188,398 L188,399 L189,399 L189,399 L190,399 L190,397 L191,397 L191,399 L192,399 L192,397 L193,397 L193,398 L194,398 L194,397 L195,397 L195,398 L196,398 L196,397 L197,397 L197,398 L198,398 L198,397 L199,397 L199,397 L200,397 L200,397 L201,397 L201,397 L202,397 L202,396 L203,396 L203,396 L204,396 L204,398 L205,398 L205,398 L206,398 L206,398 L207,398 L207,399 L208,399 L208,397 L209,397 L209,399 L210,399 L210,397 L211,397 L211,399 L212,399 L212,398 L213,398 L213,398 L214,398 L214,399 L215,399 L215,399 L216,399 L216,399 L217,399 L217,397 L218,397 L218,398 L219,398 L219,397 L220,397 L220,397 L221,397 L221,397 L222,397 L222,399 L223,399 L223,397 L224,397 L224,397 L225,397 L225,397 L226,397 L226,398 L227,398 L227,399 L228,399 L228,398 L229,398 L229,396 L230,396 L230,397 L231,397 L231,397 L232,397 L232,395 L233,395 L233,396 L234,396 L234,395 L235,395 L235,395 L236,395 L236,395 L237,395 L237,395 L238,395 L238,394 L239,394 L239,393 L240,393 L240,391 L241,391 L241,391 L242,391 L242,389 L243,389 L243,390 L244,390 L244,389 L245,389 L245,389 L246,389 L246,387 L247,387 L247,385 L248,385 L248,386 L249,386 L249,384 L250,384 L250,385 L251,385 L251,383 L252,383 L252,382 L253,382 L253,383 L254,383 L254,380 L255,380 L255,379 L256,379 L256,379 L257,379 L257,378 L258,378 L258,376 L259,376 L259,377 L260,377 L260,378 L261,378 L261,376 L262,376 L262,376 L263,376 L263,376 L264,376 L264,375 L265,375 L265,375 L266,375 L266,374 L267,374 L267,374 L268,374 L268,372 L269,372 L269,372 L270,372 L270,371 L271,371 L271,371 L272,371 L272,371 L273,371 L273,370 L274,370 L274,370 L275,370 L275,370 L276,370 L276,368 L277,368 L277,368 L278,368 L278,367 L279,367 L279,368 L280,368 L280,365 L281,365 L281,365 L282,365 L282,366 L283,366 L283,365 L284,365 L284,365 L285,365 L285,364 L286,364 L286,364 L287,364 L287,366 L288,366 L288,364 L289,364 L289,363 L290,363 L290,364 L291,364 L291,364 L292,364 L292,363 L293,363 L293,364 L294,364 L294,365 L295,365 L295,363 L296,363 L296,363 L297,363 L297,364 L298,364 L298,364 L299,364 L299,365 L300,365 L300,361 L301,361 L301,366 L302,366 L302,369 L303,369 L303,360 L304,360 L304,366 L305,366 L305,361 L306,361 L306,368 L307,368 L307,370 L308,370 L308,366 L309,366 L309,356 L310,356 L310,362 L311,362 L311,366 L312,366 L312,371 L313,371 L313,365 L314,365 L314,370 L315,370 L315,367 L316,367 L316,365 L317,365 L317,369 L318,369 L318,364 L319,364 L319,365 L320,365 L320,368 L321,368 L321,365 L322,365 L322,368 L323,368 L323,363 L324,363 L324,357 L325,357 L325,358 L326,358 L326,361 L327,361 L327,355 L328,355 L328,358 L329,358 L329,343 L330,343 L330,351 L331,351 L331,345 L332,345 L332,355 L333,355 L333,353 L334,353 L334,354 L335,354 L335,358 L336,358 L336,357 L337,357 L337,347 L338,347 L338,357 L339,357 L339,359 L340,359 L340,357 L341,357 L341,359 L342,359 L342,356 L343,356 L343,356 L344,356 L344,340 L345,340 L345,344 L346,344 L346,348 L347,348 L347,340 L348,340 L348,349 L349,349 L349,342 L350,342 L350,346 L351,346 L351,355 L352,355 L352,368 L353,368 L353,370 L354,370 L354,381 L355,381 L355,384 L356,384 L356,384 L357,384 L357,346 L358,346 L358,388 L359,388 L359,399 L360,399 L360,396 L361,396 L361,395 L362,395 L362,396 L363,396 L363,398 L364,398 L364,394 L365,394 L365,390 L366,390 L366,399 L367,399 L367,402 L368,402 L368,398 L369,398 L369,406 L370,406 L370,405 L371,405 L371,403 L372,403 L372,393 L373,393 L373,399 L374,399 L374,401 L375,401 L375,398 L376,398 L376,403 L377,403 L377,420 Z" fill="#d9d9d9"/>
<g stroke="#c4c4c4" stroke-width="1">
<line x1="188.5" y1="169" x2="188.5" y2="420"/><line x1="251.5" y1="169" x2="251.5" y2="420"/><line x1="313.5" y1="169" x2="313.5" y2="420"/>
<line x1="126" y1="232.5" x2="377" y2="232.5"/><line x1="126" y1="294.5" x2="377" y2="294.5"/><line x1="126" y1="357.5" x2="377" y2="357.5"/>
</g>
<line x1="126.5" y1="419.5" x2="376.5" y2="169.5" stroke="#b8b8b8" stroke-width="1"/>
<path d="M126.5,419.5 L128.5,417.6 L130.5,415.8 L132.5,413.9 L134.5,412.0 L136.5,410.1 L138.5,408.3 L140.5,406.4 L142.5,404.5 L144.5,402.6 L146.5,400.7 L148.5,398.9 L150.5,397.0 L152.5,395.1 L154.5,393.2 L156.5,391.3 L158.5,389.4 L160.5,387.4 L162.5,385.5 L164.5,383.6 L166.5,381.7 L168.5,379.7 L170.5,377.8 L172.5,375.8 L174.5,373.9 L176.5,371.9 L178.5,369.9 L180.5,368.0 L182.5,366.0 L184.5,364.0 L186.5,362.0 L188.5,359.9 L190.5,357.9 L192.5,355.9 L194.5,353.8 L196.5,351.8 L198.5,349.7 L200.5,347.6 L202.5,345.5 L204.5,343.4 L206.5,341.3 L208.5,339.2 L210.5,337.0 L212.5,334.9 L214.5,332.7 L216.5,330.5 L218.5,328.3 L220.5,326.1 L222.5,323.9 L224.5,321.6 L226.5,319.4 L228.5,317.1 L230.5,314.9 L232.5,312.6 L234.5,310.3 L236.5,308.0 L238.5,305.7 L240.5,303.4 L242.5,301.1 L244.5,298.8 L246.5,296.5 L248.5,294.1 L250.5,291.8 L252.5,289.5 L254.5,287.2 L256.5,284.9 L258.5,282.5 L260.5,280.2 L262.5,277.9 L264.5,275.6 L266.5,273.3 L268.5,271.0 L270.5,268.7 L272.5,266.4 L274.5,264.1 L276.5,261.9 L278.5,259.6 L280.5,257.4 L282.5,255.1 L284.5,252.9 L286.5,250.7 L288.5,248.5 L290.5,246.3 L292.5,244.1 L294.5,242.0 L296.5,239.8 L298.5,237.7 L300.5,235.6 L302.5,233.5 L304.5,231.4 L306.5,229.4 L308.5,227.4 L310.5,225.4 L312.5,223.4 L314.5,221.4 L316.5,219.5 L318.5,217.6 L320.5,215.7 L322.5,213.9 L324.5,212.0 L326.5,210.2 L328.5,208.4 L330.5,206.6 L332.5,204.9 L334.5,203.1 L336.5,201.4 L338.5,199.7 L340.5,198.0 L342.5,196.4 L344.5,194.7 L346.5,193.1 L348.5,191.5 L350.5,189.8 L352.5,188.2 L354.5,186.6 L356.5,185.0 L358.5,183.5 L360.5,181.9 L362.5,180.3 L364.5,178.8 L366.5,177.2 L368.5,175.7 L370.5,174.1 L372.5,172.6 L374.5,171.0 L376.5,169.5" fill="none" stroke="#000" stroke-width="1"/>
<rect x="125.5" y="416.5" width="3" height="3" fill="#fff" stroke="#000"/>
<rect x="214" y="328" width="5" height="5" fill="#000"/>
<rect x="314.5" y="217.5" width="4" height="4" fill="#fff" stroke="#000"/>
<rect x="374.5" y="169.5" width="3" height="3" fill="#fff" stroke="#000"/>
<rect x="125.5" y="168.5" width="252" height="252" fill="none" stroke="#000"/>
<path d="M120.5,441 L120.5,438 L124.5,434 L128.5,438 L128.5,441 Z" fill="#000"/>
<path d="M374.5,441.5 L374.5,438.5 L378.5,434.5 L382.5,438.5 L382.5,441.5 Z" fill="#fff" stroke="#333"/>
</svg>

<div class="t" style="left:49px;top:386px">输出(<span class="u">O</span>):</div>
<div class="a" style="left:49px;top:400px;width:40px;height:21px;border:1px solid #8c9cb0;background:#fafcff"></div>
<div class="t" style="left:52px;top:405px;font-size:12px;line-height:13px;-webkit-text-stroke:0">90</div>
<div class="t" style="left:124px;top:445px">输入(<span class="u">I</span>):</div>
<div class="a" style="left:124px;top:459px;width:40px;height:22px;border:1px solid #8c9cb0;background:#fff"></div>
<div class="t" style="left:127px;top:464px;font-size:12px;line-height:13px;-webkit-text-stroke:0">92</div>

<!-- eyedroppers -->
<svg class="a" style="left:199px;top:460px" width="75" height="20"><g transform="translate(0,0)">
<path d="M8.2,7.2 L10.8,9.8 L3.2,17.2 Q1.8,18.2 1,17.2 Q0.2,16.2 1.2,14.8 Z" fill="#111" stroke="#111" stroke-width="0.9"/>
<path d="M7.5,10 L5,12.5" stroke="#fff" stroke-width="1.1" opacity="0.85"/>
<path d="M6.8,6.4 L11.6,11.2" stroke="#2a2a2a" stroke-width="2.6"/>
<ellipse cx="13" cy="5" rx="3.6" ry="2.6" transform="rotate(-45 13 5)" fill="#3a3a3a"/>
<path d="M11.5,3.8 L14,3" stroke="#888" stroke-width="0.8"/>
</g><g transform="translate(26.5,0)">
<path d="M8.2,7.2 L10.8,9.8 L3.2,17.2 Q1.8,18.2 1,17.2 Q0.2,16.2 1.2,14.8 Z" fill="#8a8a8a" stroke="#222" stroke-width="0.9"/>
<path d="M7.5,10 L5,12.5" stroke="#fff" stroke-width="1.1" opacity="0.85"/>
<path d="M6.8,6.4 L11.6,11.2" stroke="#2a2a2a" stroke-width="2.6"/>
<ellipse cx="13" cy="5" rx="3.6" ry="2.6" transform="rotate(-45 13 5)" fill="#3a3a3a"/>
<path d="M11.5,3.8 L14,3" stroke="#888" stroke-width="0.8"/>
</g><g transform="translate(52.5,0)">
<path d="M8.2,7.2 L10.8,9.8 L3.2,17.2 Q1.8,18.2 1,17.2 Q0.2,16.2 1.2,14.8 Z" fill="#fafafa" stroke="#222" stroke-width="0.9"/>
<path d="M7.5,10 L5,12.5" stroke="#fff" stroke-width="1.1" opacity="0.85"/>
<path d="M6.8,6.4 L11.6,11.2" stroke="#2a2a2a" stroke-width="2.6"/>
<ellipse cx="13" cy="5" rx="3.6" ry="2.6" transform="rotate(-45 13 5)" fill="#3a3a3a"/>
<path d="M11.5,3.8 L14,3" stroke="#888" stroke-width="0.8"/>
</g></svg>
<div class="a" style="left:296px;top:463px;width:13px;height:13px;border:1px solid #46566a;background:linear-gradient(135deg,#dcdcd7,#fff)"></div>
<div class="t" style="left:312px;top:465px">显示修剪(<span class="u">W</span>)</div>

<!-- expander -->
<div class="a" style="left:56px;top:498px;width:15px;height:15px;border-radius:50%;background:radial-gradient(circle at 50% 40%,#fff,#e8e8e8 60%,#c8c8c8);box-shadow:0 1px 1px #aaa"></div>
<svg class="a" style="left:56px;top:498px" width="15" height="15"><path d="M4.5,4 L7.5,7 L10.5,4 M4.5,8 L7.5,11 L10.5,8" stroke="#000" stroke-width="1.5" fill="none"/></svg>
<div class="t" style="left:77px;top:499px">曲线显示选项</div>
<div class="a" style="left:153px;top:503px;width:220px;height:1px;background:#b0b0b0"></div>

<!-- buttons -->
<div class="btn" style="top:110px;height:18px;border-color:#1f3f73;box-shadow:inset 0 0 0 1px #a8c0f0, inset 0 -1px 0 2px #c8d8f8">确定</div>
<div class="btn" style="top:138px;height:18px">取消</div>
<div class="btn" style="top:173px;height:18px;border-color:#c8c8c0;background:#f0f0ec;color:#a8a89c">平滑(<span class="u">M</span>)</div>
<div class="btn" style="top:208px;height:18px">自动(<span class="u">A</span>)</div>
<div class="btn" style="top:236px;height:18px">选项(<span class="u">T</span>)...</div>
<div class="a" style="left:415px;top:269px;width:13px;height:13px;border:1px solid #46566a;background:linear-gradient(135deg,#dcdcd7,#fff)"></div>
<svg class="a" style="left:415px;top:269px" width="13" height="13"><path d="M3,6 L5.5,9 L10,3.5" stroke="#21a121" stroke-width="2" fill="none"/></svg>
<div class="t" style="left:431px;top:270px">预览(<span class="u">P</span>)</div>
</body></html>
